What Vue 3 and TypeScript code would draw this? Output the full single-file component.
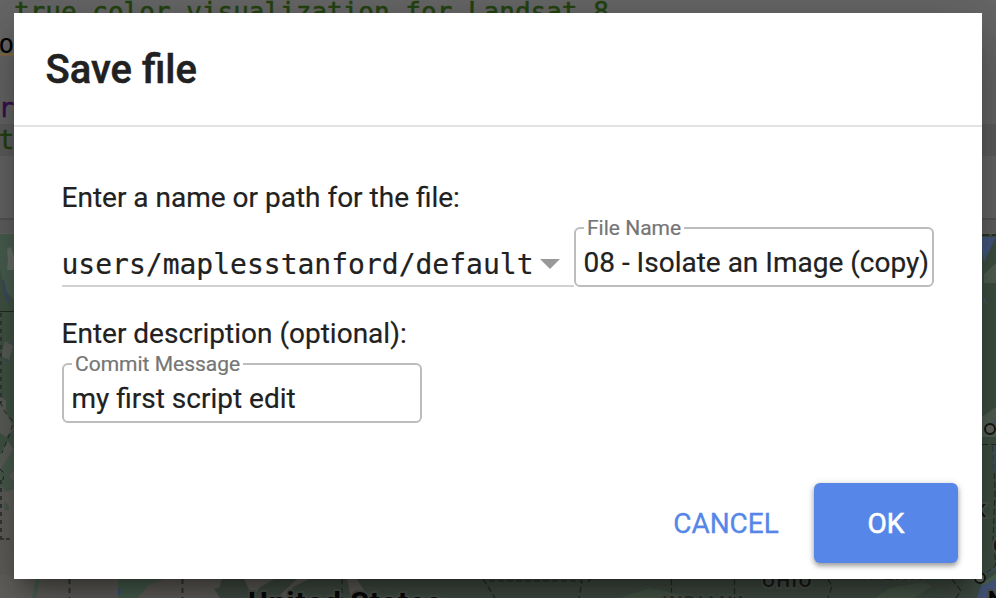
<script setup lang="ts">
import { ref } from 'vue'

const path = ref('users/maplesstanford/default')
const fileName = ref('08 - Isolate an Image (copy)')
const message = ref('my first script edit')
</script>

<template>
  <main class="screen">
    <svg class="backdrop" viewBox="0 0 996 598" width="996" height="598" aria-hidden="true">
      <rect width="996" height="598" fill="#666" />
      <rect y="124" width="996" height="32" fill="#5e5e5e" />
      <rect y="218" width="996" height="2" fill="#555" />
      <rect y="220" width="996" height="13" fill="#616161" />
      <path d="M0 54.500H14" stroke="#8a6b3a" stroke-width="2" />
      <g class="code">
        <text x="14" y="21" class="comment">true color visualization for Landsat 8</text>
        <text x="-1.500" y="53">o</text>
        <text x="-1.500" y="117" class="keyword">r</text>
        <text x="-1.500" y="149" class="comment">t</text>
      </g>

      <rect y="234" width="996" height="364" fill="#435046" />
      <rect y="234" width="16" height="364" fill="#415445" />
      <path d="M0 234h14v66L5 290 0 270z" fill="#496050" />
      <path d="M7 249l4-2 3 10v13H7l1-10z" fill="#687069" />
      <path d="M3 280l4 20M4 290l5 12" stroke="#3e4a6b" stroke-width="2" />
      <path d="M5 341l8 5-4 14-8-4zM0 397l6 3v12l8 17-8 8-6-4zM0 455l8-14 6 9v60l-7-8-7 5z" fill="#5c5f59" />
      <path d="M0 470l14-22v22L0 488zM0 480l14 0v18l-10-8z" fill="#4a5b4d" />
      <path d="M0 494l14-5v109H0z" fill="#605f5b" />
      <path d="M0 471l5 1 8 9v8l-10-1zM5 501l4 5v5l-5-2z" fill="#4a5b4d" />
      <path d="M0 311.500h14" stroke="#222b24" />
      <path d="M1 313v90M1 480v60" stroke="#323934" stroke-width="2" stroke-dasharray="4 4" />
      <path d="M0 402l5 10 7 8v8l-10 25M0 469l4 4-1 7" fill="none" stroke="#222722" stroke-dasharray="5 4" />
      <path d="M0 539h10" stroke="#3a3a38" stroke-width="2" stroke-dasharray="4 2" />
      <path d="M5 361l3-3v4zM12 342l2-3v5z" fill="#3d4872" />

      <path d="M0 575H205l15 23H0z" fill="#64625e" />
      <path d="M36 579h4l-4 19h-4z" fill="#4b6453" />
      <path d="M112 575h96l-35 10-30 7-12 6h-13z" fill="#64635f" />
      <path d="M118 598v-20h48l-18 8-10 12z" fill="#4c6252" />
      <path d="M140 598q8-18 46-19h36l-3 9-15 2v8zM244 579h30l-15 9-6 10zM297 579h12l-16 8-7 11h-9zM347 579h10l12 19h-18z" fill="#65625e" />
      <path d="M69.500 579v19M182.500 579v19M342 579v19" stroke="#313a33" stroke-width="2" stroke-dasharray="5 4" />
      <path d="M118 588l3 4-3 4z" fill="#3e5382" />
      <g fill="none" stroke="#242c26" stroke-width="1.200" stroke-dasharray="6 3">
        <path d="M483 579l12 19M489 581h93l-3 17M588 582l3-3M671.500 579v19M734.500 579v19M828 579l4 7-4 12M952 579l9 12-5 7" />
      </g>
      <path d="M875 598l15-10 34-6 8 4-18 12zM620 598l30-10 45 10z" fill="#4b5a49" />

      <path d="M978 234h18v364h-18z" fill="#3e5042" />
      <path d="M982 250v-13h14l-12 25z" fill="#46587f" />
      <path d="M984 274l12-11v20h-12zM982 417l14-10v30h-14z" fill="#526154" />
      <path d="M982 235h14" stroke="#161b17" stroke-dasharray="7 3" />
      <path d="M982 444.500h14M993 446l2 45-2 50 3 24-14 12" fill="none" stroke="#202a23" stroke-dasharray="6 3" />
      <path d="M996 418l-3 8M994 446v25M984 298l2 6M996 568l-13 8" stroke="#46587f" />
      <path d="M982 582l14-8v24h-19z" fill="#46587f" />
      <path d="M982 583l14-9v4l-13 8z" fill="#4d654d" />
      <circle cx="990" cy="429" r="5" fill="#64675f" stroke="#151815" stroke-width="2" />
      <circle cx="980" cy="578" r="5" fill="#5f675f" stroke="#151815" stroke-width="2" />
      <g class="place">
        <text x="248" y="613" class="country">United States</text>
        <text x="762" y="587">OHIO</text>
        <text x="869" y="580" opacity=".55">PENN</text>
        <text x="662" y="609" opacity=".55">INDIANA</text>
        <text x="974" y="517">K</text>
        <text x="993" y="552">C</text>
        <text x="988" y="607" class="city">N</text>
      </g>
    </svg>

    <section class="dialog" role="dialog" aria-labelledby="title">
      <header><h1 id="title">Save file</h1></header>
      <div class="body">
        <p class="prompt">Enter a name or path for the file:</p>
        <div class="location">
          <div class="select">
            <span>{{ path }}</span>
            <svg width="20" height="10" viewBox="0 0 20 10"><path d="M0 0h20L10 10z" fill="#999" /></svg>
          </div>
          <fieldset class="field">
            <legend>File Name</legend>
            <input v-model="fileName" aria-label="File Name" />
          </fieldset>
        </div>
        <p class="prompt second">Enter description (optional):</p>
        <fieldset class="field commit">
          <legend>Commit Message</legend>
          <input v-model="message" aria-label="Commit Message" />
        </fieldset>
      </div>
      <footer>
        <button class="cancel">CANCEL</button>
        <button class="ok">OK</button>
      </footer>
    </section>
  </main>
</template>

<style>
body { overflow: hidden; }
</style>

<style scoped>
.screen {
  position: relative;
  box-sizing: border-box;
  width: 996px;
  height: 598px;
  padding: 13px 14px 19px;
  overflow: hidden;
  font-family: Roboto, sans-serif;
  color: #212121;
}
.backdrop { position: absolute; inset: 0; }
.code { font: 26px "DejaVu Sans Mono", monospace; stroke-width: .5px; }
.code .comment { fill: #234210; stroke: #234210; }
.code .keyword { fill: #371050; stroke: #371050; }
.place text {
  font: 500 19px Roboto, sans-serif;
  letter-spacing: 1.500px;
  fill: #191c19;
  stroke: #4e554e;
  stroke-width: 4px;
  paint-order: stroke;
}
.place .country { font-size: 30px; font-weight: 700; fill: #080908; letter-spacing: 1px; }
.place .city { font-size: 22px; font-weight: 700; fill: #050605; }
.dialog {
  position: relative;
  display: flex;
  flex-direction: column;
  width: 968px;
  height: 566px;
  background: #fff;
  box-shadow: 0 32px 48px 4px rgba(0, 0, 0, .14), 0 12px 60px 10px rgba(0, 0, 0, .12), 0 16px 20px -10px rgba(0, 0, 0, .4);
  -webkit-text-stroke: .2px;
}
header {
  box-sizing: border-box;
  height: 114px;
  padding: 33px 31.500px 31px;
  border-bottom: 2px solid #e3e3e3;
}
h1 { margin: 0; font-size: 40px; line-height: 48px; font-weight: 500; -webkit-text-stroke: .5px; }
.body { flex: 1; padding: 54px 48px 0; }
.prompt { margin: 0 0 0 -.5px; font-size: 28px; line-height: 34px; }
.second { margin-top: 30px; }
.location { display: flex; align-items: flex-end; height: 71px; margin-top: 1px; }
.select {
  box-sizing: border-box;
  display: flex;
  align-items: center;
  gap: 6px;
  width: 512px;
  height: 46px;
  padding-top: 3px;
  border-bottom: 2px solid #d1d1d1;
  font: 28px/44px "DejaVu Sans Mono", monospace;
}
.select span { margin-left: -.5px; }
.select svg { margin-top: -2px; }
.field {
  box-sizing: border-box;
  width: 360px;
  height: 71px;
  margin: 0;
  padding: 0 2px 0 7.500px;
  border: 2px solid #bdbdbd;
  border-radius: 6px;
  min-width: 0;
}
.commit { margin-top: 1px; }
.field legend { margin-left: .5px; padding: 0 3px; font-size: 21px; line-height: 24px; color: #757575; }
.field input {
  display: block;
  box-sizing: border-box;
  width: 100%;
  height: 44px;
  padding: 0;
  border: 0;
  outline: 0;
  background: none;
  color: inherit;
  font: 28px Roboto, sans-serif;
  -webkit-text-stroke: .2px;
}
footer { display: flex; justify-content: flex-end; padding: 0 24px 16px; }
button {
  height: 80px;
  padding: 0;
  border: 0;
  border-radius: 6px;
  font: 28px Roboto, sans-serif;
  -webkit-text-stroke: .3px;
}
.cancel { width: 176px; background: none; color: #5686e8; }
.ok {
  width: 144px;
  background: #5686e8;
  color: #fff;
  -webkit-text-stroke: .6px;
  box-shadow: 0 3px 5px rgba(0, 0, 0, .32), 0 1px 9px rgba(0, 0, 0, .15);
}
</style>
